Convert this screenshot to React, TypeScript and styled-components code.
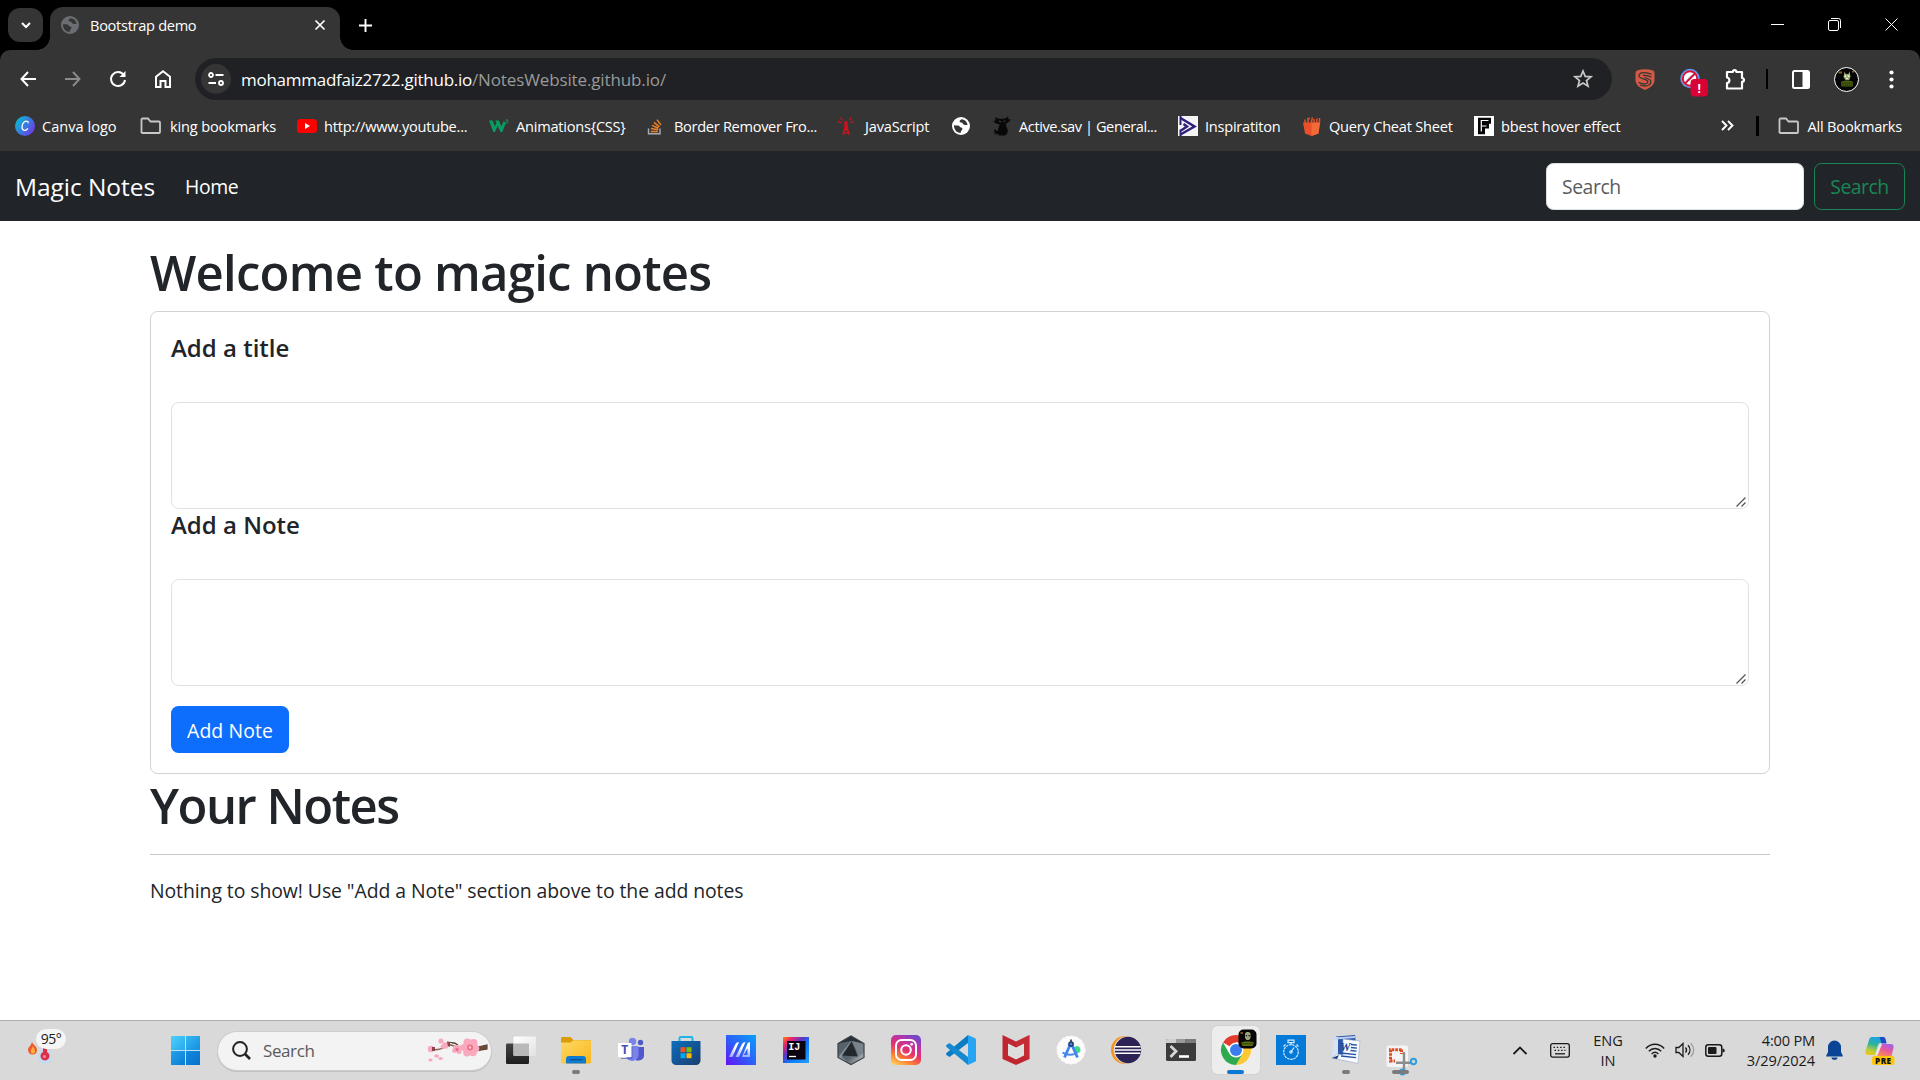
import React from "react";
import styled, { createGlobalStyle } from "styled-components";

const GlobalStyle = createGlobalStyle`
  *, *::before, *::after { box-sizing: border-box; }
  html, body { margin: 0; padding: 0; background: #fff; overflow: hidden; }
  body { font-family: "Open Sans", "Noto Sans", sans-serif; color: #212529; }
  svg { display: block; flex: none; overflow: visible; }
`;

const Screen = styled.div`
  width: 1920px;
  height: 1080px;
  display: flex;
  flex-direction: column;
  overflow: hidden;
`;

const Label = styled.span<{ $track?: number }>`
  white-space: nowrap;
  letter-spacing: ${(p) => p.$track ?? 0}px;
`;

/* ---------- Browser chrome ---------- */

const TabStrip = styled.div`
  height: 50px;
  flex: none;
  display: flex;
  padding-left: 8px;
  background: #000;
  color: #fff;
`;

const TabSearch = styled.div`
  width: 35px;
  height: 34px;
  margin-top: 8px;
  border-radius: 12px;
  background: #353535;
  display: grid;
  place-items: center;
`;

const Tab = styled.div`
  position: relative;
  width: 290px;
  height: 43px;
  margin: 7px 0 0 7px;
  padding: 0 15px 7px 11px;
  border-radius: 13px 13px 0 0;
  background: #353535;
  display: flex;
  align-items: center;
  gap: 11px;
  font-size: 14.6px;

  &::before,
  &::after {
    content: "";
    position: absolute;
    bottom: 0;
    width: 13px;
    height: 13px;
  }
  &::before {
    left: -13px;
    background: radial-gradient(circle at 0 0, transparent 12.5px, #353535 13px);
  }
  &::after {
    right: -13px;
    background: radial-gradient(circle at 100% 0, transparent 12.5px, #353535 13px);
  }
`;

const TabTitle = styled(Label)`
  flex: 1;
`;

const NewTab = styled.div`
  width: 51px;
  height: 50px;
  display: grid;
  place-items: center;
`;

const WindowControls = styled.div`
  margin-left: auto;
  display: flex;
`;

const WindowButton = styled.div`
  width: 57px;
  height: 49px;
  display: grid;
  place-items: center;
`;

const ToolbarBack = styled.div`
  background: #000;
  flex: none;
`;

const Toolbar = styled.div`
  height: 58px;
  padding-left: 5px;
  display: flex;
  align-items: center;
  background: #353535;
  border-radius: 10px 10px 0 0;
  color: #fff;
`;

const ToolCell = styled.div<{ $w?: number }>`
  width: ${(p) => p.$w ?? 45}px;
  flex: none;
  display: flex;
  justify-content: center;
  align-items: center;
`;

const AddressBar = styled.div`
  width: 1417px;
  height: 42px;
  margin: 0 10px;
  padding: 0 19px 0 6px;
  border-radius: 21px;
  background: #202124;
  display: flex;
  align-items: center;
  font-size: 17px;
`;

const SiteInfo = styled.div`
  width: 30px;
  height: 30px;
  margin-right: 10px;
  border-radius: 50%;
  background: #353535;
  display: grid;
  place-items: center;
`;

const Path = styled(Label)`
  flex: 1;
  color: #9a9a9a;
`;

const Avatar = styled.div`
  width: 25px;
  height: 25px;
  border-radius: 50%;
  border: 1px solid #fff;
  background: #050505;
  overflow: hidden;
  display: grid;
  place-items: center;
`;

const BookmarksBar = styled.div`
  height: 43px;
  flex: none;
  padding: 0 18px 8px 15px;
  display: flex;
  align-items: center;
  background: #353535;
  color: #fff;
  font-size: 14.6px;
`;

const Bookmark = styled.div<{ $w?: number }>`
  width: ${(p) => (p.$w ? `${p.$w}px` : "auto")};
  flex: none;
  display: flex;
  align-items: center;
  gap: 7px;
`;

const Overflow = styled.div`
  margin-left: auto;
  display: flex;
  align-items: center;
`;

const Divider = styled.div<{ $w?: number }>`
  width: ${(p) => p.$w ?? 2}px;
  height: 20px;
  background: #000;
`;

/* ---------- Web page ---------- */

const Page = styled.div`
  flex: 1;
  background: #fff;
`;

const Navbar = styled.nav`
  height: 70px;
  padding: 0 15px;
  display: flex;
  align-items: center;
  background: #212529;
  color: #fff;
`;

const Brand = styled(Label)`
  font-size: 24.5px;
  margin-right: 30px;
`;

const NavLink = styled(Label)`
  font-size: 19.4px;
`;

const SearchForm = styled.form`
  margin-left: auto;
  display: flex;
  gap: 10px;
`;

const SearchInput = styled.input`
  width: 258px;
  height: 47px;
  padding: 0 15px;
  border: 1px solid #dee2e6;
  border-radius: 7.5px;
  background: #fff;
  font: 19.4px "Open Sans", sans-serif;
  letter-spacing: -0.45px;
  &::placeholder { color: #595c5f; opacity: 1; }
`;

const SearchButton = styled.button`
  width: 91px;
  height: 47px;
  padding: 0;
  border: 1px solid #198754;
  border-radius: 7.5px;
  background: transparent;
  color: #198754;
  font: 19.4px "Open Sans", sans-serif;
  letter-spacing: -0.5px;
`;

const Container = styled.main`
  width: 1620px;
  margin: 0 auto;
  padding-top: 20px;
`;

const Heading = styled.h1<{ $track: number }>`
  margin: 0 0 10px;
  font-size: 49px;
  line-height: 62px;
  height: 60px;
  font-weight: 600;
  letter-spacing: ${(p) => p.$track}px;
`;

const Card = styled.section`
  height: 463px;
  padding: 20px;
  border: 1px solid #d1d2d3;
  border-radius: 7.5px;
`;

const CardTitle = styled.h5`
  margin: 0 0 40px;
  height: 30px;
  font-size: 24px;
  line-height: 32px;
  font-weight: 600;
  letter-spacing: 0;
`;

const NoteField = styled.div`
  position: relative;
  height: 107px;
`;

const NoteArea = styled.textarea`
  display: block;
  width: 1578px;
  height: 107px;
  border: 1px solid #dee2e6;
  border-radius: 7.5px;
  background: #fff;
  resize: none;
`;

const Grip = styled.svg`
  position: absolute;
  right: 3px;
  bottom: 2px;
`;

const AddButton = styled.button`
  display: block;
  width: 118px;
  height: 47px;
  margin-top: 20px;
  padding: 2px 0 0;
  border: 0;
  border-radius: 7.5px;
  background: #0d6efd;
  color: #fff;
  font: 19.4px "Open Sans", sans-serif;
  letter-spacing: 0.1px;
`;

const Rule = styled.hr`
  margin: 20px 0;
  border: 0;
  height: 1px;
  background: #c7c8c9;
`;

const Empty = styled.p`
  margin: 0;
  font-size: 19.4px;
  line-height: 32px;
  letter-spacing: -0.07px;
`;

/* ---------- Taskbar ---------- */

const Taskbar = styled.footer`
  height: 60px;
  flex: none;
  display: flex;
  align-items: center;
  background: #d9d9d9;
  border-top: 1px solid #b0b0b0;
  color: #1b1b1b;
`;

const Weather = styled.div`
  width: 171px;
  height: 59px;
  padding: 7px 0 0 28px;
  position: relative;
`;

const Temperature = styled.div`
  position: absolute;
  left: 36px;
  top: 8px;
  width: 30px;
  height: 20px;
  border-radius: 10px;
  background: #f5f5f5;
  font-size: 14px;
  line-height: 19px;
  text-align: center;
  letter-spacing: -0.5px;
`;

const StartButton = styled.div`
  width: 29px;
  height: 29px;
  display: grid;
  grid-template-columns: 14px 14px;
  grid-template-rows: 14px 14px;
  gap: 1px;
  background: #bfe0f5;
`;

const Pane = styled.div<{ $from: string; $to: string }>`
  background: linear-gradient(135deg, ${(p) => p.$from}, ${(p) => p.$to});
`;

const TaskSearch = styled.div`
  width: 273px;
  height: 38px;
  margin: 0 2px 0 18px;
  padding: 0 3px 0 14px;
  border-radius: 19px;
  background: #f3f3f3;
  box-shadow: 0 0 0 1px #cdcdcd, 0 1px 0 1px #c0c0c0;
  display: flex;
  align-items: center;
  gap: 12px;
  color: #5a5a5a;
  font-size: 17px;
`;

const TaskSearchText = styled(Label)`
  flex: 1;
`;

const TaskButton = styled.div`
  position: relative;
  width: 55px;
  height: 59px;
  padding-bottom: 1px;
  flex: none;
  display: grid;
  place-items: center;
`;

const ActiveTile = styled.div`
  width: 48px;
  height: 48px;
  border-radius: 5px;
  background: #ededed;
  box-shadow: 0 0 1px #aaa;
  display: grid;
  place-items: center;
`;

const RunMark = styled.div<{ $w: number; $color: string }>`
  position: absolute;
  left: calc(50% - ${(p) => p.$w / 2}px);
  bottom: 6px;
  width: ${(p) => p.$w}px;
  height: 4px;
  border-radius: 2px;
  background: ${(p) => p.$color};
`;

const Tray = styled.div`
  flex: 1;
  display: flex;
  align-items: center;
  padding: 0 0 1px 84px;
  font-size: 14.6px;
  line-height: 20px;
`;

const TrayCell = styled.div<{ $w: number }>`
  width: ${(p) => p.$w}px;
  display: flex;
  flex: none;
`;

const Stack = styled.div<{ $w: number; $align: string }>`
  width: ${(p) => p.$w}px;
  flex: none;
  display: flex;
  flex-direction: column;
  align-items: ${(p) => p.$align};
  padding-bottom: 1px;
`;

/* ---------- Drawings ---------- */

const Globe = ({ size = 18, fill = "#6a6d71", cut = "#353535" }) => (
  <svg width={size} height={size} viewBox="0 0 18 18">
    <circle cx="9" cy="9" r="9" fill={fill} />
    <path d="M2 8.2c2 .4 5-.4 5.600 1.200.4 1.400 2.600.6 2.800 2 .2 1.600-1.400 1.400-1.600 4.400-3.800.2-7-3-6.800-7.600zM9.600 2.200c-1 1-2.300 1-2 2.400.4 1.400 2.600.6 3.200 1.800.6 1.400 2.600 2 4.800 1.600-.6-3.600-3-5.600-6-5.800z" fill={cut} />
  </svg>
);

const FolderOutline = () => (
  <svg width="23" height="20" viewBox="0 0 23 20" fill="none" stroke="#c8c8c8" strokeWidth="1.800">
    <path d="M1.500 17V3.500a1 1 0 0 1 1-1h5.500l2.500 3h8.500a1 1 0 0 1 1 1V16a1 1 0 0 1-1 1H2.500a1 1 0 0 1-1-1z" />
  </svg>
);

const Creature = ({ size }: { size: number }) => (
  <svg width={size} height={size} viewBox="0 0 20 20">
    <path d="M1.500 2.500h3.500v2H1.500zM15 2h2v1.500h-2z" fill="#8a5a14" />
    <path d="M7.500 2.500l1.200 2.500h2.600l1.200-2.500 1 5-1.300 3.500H8.500L6.500 8z" fill="#9aa880" />
    <path d="M7.500 6.500h1.800v1.500H7.500zM10.800 6.500h1.700v1.500h-1.700zM9 9h2v1H9z" fill="#efffb0" />
    <path d="M4 13c3-2 9-2 12 0l-.5 4.500h-11z" fill="#4d6112" />
    <path d="M5 14h10M5.500 16h9" stroke="#1b2406" strokeWidth=".9" strokeDasharray="1.500 .6" />
  </svg>
);

const CanvaIcon = () => (
  <svg width="20" height="20" viewBox="0 0 20 20">
    <defs><linearGradient id="canva" x1="0" y1="0.200" x2="1" y2="0.900"><stop offset="0" stopColor="#09bcd0" /><stop offset="0.500" stopColor="#3b78e0" /><stop offset="1" stopColor="#7a2be8" /></linearGradient></defs>
    <circle cx="10" cy="10" r="10" fill="url(#canva)" />
    <path d="M13.300 7.200c0-1.600-1-2.200-2.200-2.100C8.600 5.300 6.900 8.500 7 11.300c.1 3.600 3.900 4.300 5.900 1" fill="none" stroke="#fff" strokeWidth="1.300" />
  </svg>
);

const YoutubeIcon = () => (
  <svg width="20" height="20" viewBox="0 0 20 20"><rect y="3" width="20" height="14" rx="3.500" fill="#f00" /><path d="M8 7l5 3-5 3z" fill="#fff" /></svg>
);

const W3Icon = () => (
  <svg width="20" height="20" viewBox="0 0 20 20" fill="none" stroke="#0a9b63">
    <path d="M0 4.500h3.600l2.400 6 1.400-3.600-.9-2.400h3.400l2.500 6 2.200-5.200 2.400 1.200-3.700 9.500h-1.800L8.700 9.800 6 16H4.300z" fill="#0a9b63" stroke="none" />
    <path d="M16.500 4h2.500l-1.300 1.600c1.800.2 1.300 2.200-.9 1.700" strokeWidth="1" />
  </svg>
);

const StackIcon = () => (
  <svg width="20" height="20" viewBox="0 0 20 20" fill="none">
    <path d="M1.500 12.500v5.300h11.500V12.500" stroke="#a9adb1" strokeWidth="1.400" />
    <path d="M3.800 15.500h7M4 12.600l7 1.200M5 9.400l6.400 2.800M7 6.400l5.300 4.400M10 3.600l4 5.500" stroke="#f08127" strokeWidth="1.500" />
  </svg>
);

const TowerIcon = () => (
  <svg width="20" height="20" viewBox="0 0 20 20" fill="none" stroke="#c8141f" strokeWidth="1.300">
    <path d="M8 6.500L5 19M8 6.500L11.300 19M6.800 11h2.500l-4 6h5.500l-3.800-6M4.500 4.500L2.500 1M11.500 4.500L13.500 1M3.500 6.800L0 5.300M12.500 6.800L16 5.300" />
    <path d="M7 6h2v5H7z" fill="#c8141f" />
  </svg>
);

const CatIcon = () => (
  <svg width="20" height="20" viewBox="0 0 20 20">
    <path d="M3.500.5l3.500 1.300h5l4-1.500.5 2.900 2.500.3-2.300 2.500-2.900 2 .9 3.500c2 3.500 1 7-2 8H7c-4.500 0-7-3.200-4.800-6.500 2.300 1.800 3.300 2.500 4 .8 0-2.300 1-3.300 1.600-5.300L4 7.500 1 5l2.300-.3z" fill="#080808" />
    <path d="M4 1l3 1.200h5l3.600-1.400M1.800 13.500c-1 3 1.500 5 5 5.500" fill="none" stroke="#5b5b5b" strokeWidth=".6" />
    <path d="M7 5l2.200.9M13.300 4.700l-1.900 1.200" stroke="#555" strokeWidth=".8" />
  </svg>
);

const InspirationIcon = () => (
  <svg width="20" height="20" viewBox="0 0 20 20">
    <rect width="20" height="20" fill="#f4f4f4" />
    <path d="M2.500 0v9M2.500 20v-6.500" stroke="#32207c" strokeWidth="2" />
    <path d="M2.500 2l14 8.500L2.500 18.500M3 14.500l6-4-3.500-2.500" fill="none" stroke="#32207c" strokeWidth="2.500" />
  </svg>
);

const BasketIcon = () => (
  <svg width="20" height="20" viewBox="0 0 20 20">
    <path d="M1 6.500h17L16.500 17.500 9.500 20 3 17.500z" fill="#e8502a" />
    <path d="M9.500 6.500H18L16.500 17.500 9.500 20z" fill="#f26a35" />
    <path d="M3 7V3.500M6 7V2.500h2M9 7l1.500-5.500M12 7V3M14.500 7l.5-4.500M17.500 7V2" stroke="#e8502a" strokeWidth="1.500" fill="none" />
  </svg>
);

const FIcon = () => (
  <svg width="20" height="20" viewBox="0 0 20 20">
    <rect width="20" height="20" fill="#fff" />
    <path d="M4 1.800h13v6h-2v4.700h-4v5.700H4z" fill="#050505" />
    <path d="M14.500 4.500H7.300v11M7.500 10h5" fill="none" stroke="#fff" strokeWidth="1.200" />
  </svg>
);

const Blossom = () => (
  <svg width="61" height="26" viewBox="0 0 61 26">
    <path d="M4 11.500c8 1 12-1 18-5 8 3 16 4 30 3.500" fill="none" stroke="#8a6455" strokeWidth="1.500" />
    <path d="M20 4l8 1 3 2M51 9l9-2v4l-9 1.500z" stroke="#5e4034" strokeWidth="1.200" fill="#6d4a3a" />
    <g fill="#f9a9bd">
      <circle cx="4" cy="11" r="3.200" /><circle cx="14" cy="3" r="2.600" /><circle cx="18.500" cy="7.500" r="3.200" /><circle cx="15.500" cy="8.500" r="2" />
      <circle cx="28.500" cy="9.500" r="2.500" /><circle cx="32.500" cy="9.800" r="2.500" /><circle cx="27.500" cy="12.700" r="2.400" /><circle cx="32" cy="13.500" r="2.500" />
      <circle cx="40.500" cy="4.500" r="4" /><circle cx="46.500" cy="5" r="4" /><circle cx="48.500" cy="10.500" r="3.800" /><circle cx="37.500" cy="9.500" r="3.700" /><circle cx="46" cy="14.500" r="3.800" /><circle cx="40" cy="14.800" r="3.800" />
      <ellipse cx="3.500" cy="22" rx="2.200" ry="1.500" /><ellipse cx="9.500" cy="18" rx="2.500" ry="1.700" /><ellipse cx="13.500" cy="20.500" rx="2.300" ry="1.500" />
    </g>
    <path d="M5 9h3v4H5zM20 4l3 1v4l-2-1z" fill="#8d4450" />
    <circle cx="43" cy="9.500" r="3" fill="#f06c8c" /><circle cx="43" cy="9.500" r="1.200" fill="#ffd9b8" />
    <circle cx="30" cy="11.500" r="1.700" fill="#f06c8c" />
  </svg>
);

const Ico: React.FC<{ children: React.ReactNode }> = ({ children }) => (
  <svg width="30" height="30" viewBox="0 0 30 30">{children}</svg>
);

const TaskView = () => (
  <Ico>
    <defs><linearGradient id="tvd" x1="0" y1="0" x2="0" y2="1"><stop offset="0" stopColor="#444" /><stop offset="1" stopColor="#1d1d1d" /></linearGradient><linearGradient id="tvl" x1="0" y1="0" x2="1" y2="1"><stop offset="0" stopColor="#fff" /><stop offset="1" stopColor="#e2e2e2" /></linearGradient></defs>
    <rect y="8.500" width="23" height="20.500" rx="1.200" fill="url(#tvd)" />
    <rect x="7.500" y="1.500" width="22.500" height="19.500" rx="1.200" fill="url(#tvl)" />
    <path d="M7.500 8.500H23V21H8.700a1.200 1.200 0 0 1-1.200-1.200z" fill="#b9b9b9" />
  </Ico>
);

const Explorer = () => (
  <Ico>
    <defs><linearGradient id="fold" x1="0" y1="0" x2="1" y2="1"><stop offset="0" stopColor="#ffd964" /><stop offset="1" stopColor="#f9b61f" /></linearGradient></defs>
    <path d="M0 3.500A1.500 1.500 0 0 1 1.500 2h8l3 3H28.500A1.500 1.500 0 0 1 30 6.500V14H0z" fill="#dc9b0a" />
    <path d="M0 7.500h9.500l3-2.200H30V27a1.500 1.500 0 0 1-1.500 1.500h-27A1.500 1.500 0 0 1 0 27z" fill="url(#fold)" />
    <path d="M5 28.500v-4.500a3 3 0 0 1 3-3h14a3 3 0 0 1 3 3v4.500z" fill="#117bcf" />
    <path d="M9 24.700h12.500" stroke="#07508f" strokeWidth="1.200" />
  </Ico>
);

const Teams = () => (
  <Ico>
    <circle cx="16.500" cy="6.500" r="3.700" fill="#7b83eb" /><circle cx="24.500" cy="7.500" r="2.700" fill="#5059c9" />
    <path d="M20 12h8v8.500a5 5 0 0 1-5 5h-3z" fill="#5059c9" />
    <path d="M11 11h11.500v9a6.500 6.500 0 0 1-12 3z" fill="#7b83eb" />
    <path d="M15 12h1.500v12H5v-1h10z" fill="#444bb0" opacity=".6" />
    <rect x="2" y="8" width="13.500" height="14" fill="#fff" />
    <text x="8.700" y="19.200" textAnchor="middle" fontFamily="Open Sans" fontWeight="700" fontSize="12" fill="#464eb8">T</text>
  </Ico>
);

const Store = () => (
  <Ico>
    <defs><linearGradient id="store" x1="0" y1="0" x2="1" y2="1"><stop offset="0" stopColor="#0a6fbe" /><stop offset="1" stopColor="#1c3c70" /></linearGradient></defs>
    <path d="M8.500 7V3.300c0-.8.500-1.300 1.300-1.300h10.400c.8 0 1.300.500 1.300 1.300V7" fill="none" stroke="#1fb5e8" strokeWidth="2" />
    <path d="M.5 6h29v19.500a4.500 4.500 0 0 1-4.500 4.500H5A4.500 4.500 0 0 1 .5 25.500z" fill="url(#store)" />
    <path d="M9.500 12.200h5v5h-5z" fill="#f35325" /><path d="M15.500 12.200h5v5h-5z" fill="#81bc06" /><path d="M9.500 18.200h5v5h-5z" fill="#05a6f0" /><path d="M15.500 18.200h5v5h-5z" fill="#ffba08" />
  </Ico>
);

const MyAsus = () => (
  <Ico>
    <defs><linearGradient id="asus" x1="0" y1="1" x2="1" y2="0"><stop offset="0" stopColor="#6512f5" /><stop offset=".5" stopColor="#2b62f8" /><stop offset="1" stopColor="#08a0fb" /></linearGradient><linearGradient id="asusm" x1="0" y1="1" x2="0" y2="0"><stop offset="0" stopColor="#9aa8ff" /><stop offset=".6" stopColor="#fff" /></linearGradient></defs>
    <rect width="30" height="30" fill="url(#asus)" />
    <path d="M3 22L9.500 9c.8-1.300 1.800-2 3.500-2L6.500 22zM9.500 22L16 9c.8-1.300 1.800-2 3.500-2L13 22z" fill="url(#asusm)" />
    <path d="M16 22L21.500 8.500c.8-1.200 2-1.500 2.500-1.200V22h-2.500V13L17.800 20h3.700v2z" fill="url(#asusm)" />
  </Ico>
);

const IntelliJ = () => (
  <Ico>
    <defs><linearGradient id="ij" x1="0" y1="0" x2="1" y2="1"><stop offset="0" stopColor="#ff8a00" /><stop offset=".18" stopColor="#f0246a" /><stop offset=".4" stopColor="#5b35c9" /><stop offset=".6" stopColor="#087cfa" /><stop offset="1" stopColor="#2a9df8" /></linearGradient></defs>
    <rect x="2" y="2" width="26" height="26" fill="url(#ij)" />
    <rect x="6" y="6" width="18.500" height="18.500" fill="#0b0410" />
    <text x="7.200" y="14.800" fontFamily="Liberation Mono" fontWeight="700" fontSize="10" fill="#fff">IJ</text>
    <path d="M8 21.500h7" stroke="#fff" strokeWidth="1.300" />
  </Ico>
);

const HexIcon = () => (
  <Ico>
    <defs><linearGradient id="hex" x1="0" y1="0" x2="1" y2="1"><stop offset="0" stopColor="#56616a" /><stop offset=".6" stopColor="#59636b" /><stop offset="1" stopColor="#d8dadd" /></linearGradient></defs>
    <path d="M15 1l13 7.500v14L15 29.500 2 22.500v-14z" fill="url(#hex)" />
    <path d="M15 1l13 7.500L15 6 2 8.500z" fill="#2a3036" />
    <path d="M2 22.500L15 6v3L5.500 22 15 29.500z" fill="#8a959d" />
    <path d="M15.500 6.500l6.500 15-16-1z" fill="#23282d" />
    <path d="M16 6l12 3v8l-5 4z" fill="#78838b" />
    <path d="M2 8.500v14L15 29.500l13-7v-14L15 1z" fill="none" stroke="#3a4147" strokeWidth="1.200" />
  </Ico>
);

const Instagram = () => (
  <Ico>
    <defs><linearGradient id="ig" x1="0.200" y1="1" x2="0.700" y2="0"><stop offset="0" stopColor="#ffc852" /><stop offset=".25" stopColor="#fb7a34" /><stop offset=".5" stopColor="#e5326c" /><stop offset=".78" stopColor="#b834a8" /><stop offset="1" stopColor="#7347c8" /></linearGradient></defs>
    <rect width="30" height="30" rx="5" fill="url(#ig)" />
    <g fill="none" stroke="#fff" strokeWidth="2"><rect x="5" y="5" width="20" height="20" rx="5.500" /><circle cx="15" cy="15" r="4.800" /></g>
    <circle cx="20.700" cy="9.300" r="1.400" fill="#fff" />
  </Ico>
);

const VsCode = () => (
  <Ico>
    <path d="M22 0v8L3.500 22 .500 20c-.6-.6-.6-1.500 0-2z" fill="#0a7cc4" />
    <path d="M22 30v-8L3.500 8 .500 10c-.6.6-.6 1.500 0 2z" fill="#1589cf" />
    <path d="M22 0l7 3.300c.6.300 1 .8 1 1.500v20.400c0 .7-.4 1.200-1 1.500L22 30z" fill="#27a5f2" />
  </Ico>
);

const McAfee = () => (
  <Ico>
    <path d="M1.500 0L15 6.500 28.500 0v24L15 30 1.500 24z" fill="#bf2630" />
    <path d="M7 8.500l8 4 8-4v12L15 24.500 7 20.500z" fill="#dedede" />
    <path d="M15 6.500v6l8-4v12l5.500 3.500V0z" fill="#d53a3f" opacity=".35" />
  </Ico>
);

const AndroidStudio = () => (
  <Ico>
    <circle cx="15" cy="15" r="14" fill="#fbfbfb" stroke="#fbfbfb" strokeDasharray="3 2" />
    <path d="M17 12.500l4-1.500c3 0 4.500 4 2.500 6.500l-3 1z" fill="#3ddc84" />
    <path d="M8.500 22.500L14.300 9.500h1.400l5.800 13" fill="none" stroke="#4285f4" strokeWidth="2.800" />
    <path d="M6.500 17.500c4 3 10 3 14.500.5" fill="none" stroke="#4285f4" strokeWidth="2" />
    <circle cx="15" cy="9" r="2.200" fill="#4285f4" stroke="#1e2a45" strokeWidth="1.200" /><path d="M15 4.500v3" stroke="#34435c" strokeWidth="1.800" />
  </Ico>
);

const Eclipse = () => (
  <Ico>
    <circle cx="14" cy="15" r="14" fill="#f7941e" /><circle cx="16.500" cy="15" r="13.800" fill="#dcdcdc" /><circle cx="17" cy="15" r="13.200" fill="#2c2255" />
    <path d="M4 11.800h25.500M3.500 15H30M4 18.300h25.500" stroke="#fff" strokeWidth="1.500" />
  </Ico>
);

const Terminal = () => (
  <Ico>
    <rect y="4" width="30" height="22" rx="1.500" fill="#3c3c3c" />
    <path d="M1.500 4H10v4H0V5.500A1.500 1.500 0 0 1 1.500 4z" fill="#cfcfcf" /><path d="M10 4h9.500v4H10z" fill="#9a9a9a" /><path d="M19.500 4h9A1.500 1.500 0 0 1 30 5.500V8H19.500z" fill="#7b7b7b" />
    <path d="M4.500 11l5.500 5.200L4.500 22" fill="none" stroke="#d5d5d5" strokeWidth="2.800" /><path d="M13 21.500h10" stroke="#fff" strokeWidth="2.600" />
  </Ico>
);

const Chrome = () => (
  <Ico>
    <circle cx="15" cy="15" r="15" fill="#fff" />
    <path d="M15 15L2 7.500A15 15 0 0 1 28 7.500H15z" fill="#e33b2e" />
    <path d="M15 15L28 7.500A15 15 0 0 1 15 30l6.500-11.200z" fill="#fcc934" />
    <path d="M15 15l6.500 3.800L15 30A15 15 0 0 1 2 7.500l6.500 11.200z" fill="#2da94f" />
    <path d="M15 7.500h13L20 16z" fill="#fcc934" />
    <circle cx="15" cy="15" r="7.500" fill="#fff" /><circle cx="15" cy="15" r="6" fill="#3b7ded" />
    <rect x="17.500" y="-5.500" width="18" height="19" rx="5" fill="#070707" />
    <g transform="translate(17.500 -5)">
      <path d="M2 2h2.500v2H2z" fill="#7a5212" />
      <path d="M6.500 3.500l1.500-1.500h2.500l1.500 1.500v4.500l-1.500 2h-2.500l-1.500-2z" fill="#9aa67c" />
      <path d="M7.300 5h1.300v1.200H7.300zM10 5h1.300v1.200H10z" fill="#111" />
      <path d="M2.500 12.500c3-1.500 10-1.500 13 0l-1.500 3.500H4z" fill="#5b6f10" />
      <path d="M4 13.800h10.500" stroke="#1b2406" strokeWidth=".8" strokeDasharray="1.500 .5" />
    </g>
  </Ico>
);

const Stopwatch = () => (
  <Ico>
    <rect width="30" height="30" fill="#0379d8" />
    <g fill="none" stroke="#d7ecff" strokeWidth="1.200"><circle cx="15" cy="17" r="7.300" strokeDasharray="2.500 .7" /><path d="M12 5.200h6v2.500h-6zM15 8v2M20.500 9.500l2 2M15 17l3-4.500M9.500 9.500l-2 2" /><circle cx="15" cy="17" r="1.200" /></g>
  </Ico>
);

const Word = () => (
  <Ico>
    <path d="M5 1.500l19-1.500 2 18-20 5z" fill="#2c56a8" /><path d="M3 2h4v22l-6-3z" fill="#d7e2f5" /><path d="M4 3.500L24 2" stroke="#bcd0f4" strokeWidth="2" />
    <path d="M12 4l17 2-2 22.500L1 23l5-4 6 1z" fill="#f7faff" stroke="#96a8c8" strokeWidth=".6" />
    <text x="9" y="15.500" fontFamily="Liberation Serif" fontStyle="italic" fontWeight="700" fontSize="12" fill="#1f4798">W</text>
    <path d="M20 9.500l6 .6M20 12.500l6 .6M19.500 15.500l6 .6M10 18l15 1.600M10 21l15 1.600" stroke="#2450a4" strokeWidth="1.400" />
    <path d="M1 23l7-3-2 4z" fill="#1d3f86" />
  </Ico>
);

const Snip = () => (
  <Ico>
    <rect x=".5" y="10.500" width="21.500" height="21.500" rx="2.500" fill="#f4f4f4" />
    <path d="M15.500 14.800H4.500V26H9M15.500 14.500V19" fill="none" stroke="#dd4b25" strokeWidth="3" strokeDasharray="2.600 1" />
    <path d="M18 17v19M10 27.800h15" stroke="#8c8c8c" strokeWidth="2.400" />
    <circle cx="27.500" cy="26.500" r="2.700" fill="none" stroke="#2c9fe0" strokeWidth="1.900" /><circle cx="16.500" cy="37" r="2.500" fill="none" stroke="#2c9fe0" strokeWidth="1.900" />
  </Ico>
);

const Copilot = () => (
  <svg width="30" height="30" viewBox="0 0 30 30">
    <defs>
      <linearGradient id="cpa" x1=".5" y1="0" x2=".2" y2="1"><stop offset="0" stopColor="#1aa3e8" /><stop offset=".4" stopColor="#2fb39b" /><stop offset=".75" stopColor="#b6cf3a" /><stop offset="1" stopColor="#f5c518" /></linearGradient>
      <linearGradient id="cpb" x1=".8" y1="0" x2=".3" y2="1"><stop offset="0" stopColor="#a45ef0" /><stop offset=".5" stopColor="#e65a9c" /><stop offset="1" stopColor="#fb8a5c" /></linearGradient>
    </defs>
    <path d="M7 2h11c2 0 2.500 1.500 3.500 6h-6c-2 0-2.500 2-3.500 5l-2 7H3c-2.500 0-3-2-2.500-4L4 5c.5-2 1.500-3 3-3z" fill="url(#cpa)" />
    <path d="M14 2h4c2 0 2.700 2 3.500 6.500h-5C15.500 5 15 2 14 2z" fill="#1f49c9" />
    <path d="M17 9h8.500c2.500 0 3.500 1.500 3 4l-2 8H12l2-6c1-4 1.500-6 3-6z" fill="url(#cpb)" />
    <path d="M16 9l-4.500 11" stroke="#e6e6e6" strokeWidth="2" />
    <rect x="7" y="21" width="22.500" height="9" rx="2.500" fill="#fdc60d" />
    <text x="18.300" y="28.500" textAnchor="middle" fontFamily="Open Sans" fontWeight="800" fontSize="8.200" letterSpacing=".4" fill="#111">PRE</text>
  </svg>
);

type Mark = { icon: React.ReactNode; text?: string; w: number; track?: number };
const bookmarks: Mark[] = [
  { icon: <CanvaIcon />, text: "Canva logo", w: 125 },
  { icon: <FolderOutline />, text: "king bookmarks", w: 157, track: -0.17 },
  { icon: <YoutubeIcon />, text: "http://www.youtube...", w: 192, track: -0.24 },
  { icon: <W3Icon />, text: "Animations{CSS}", w: 158, track: -0.24 },
  { icon: <StackIcon />, text: "Border Remover Fro...", w: 191, track: -0.31 },
  { icon: <TowerIcon />, text: "JavaScript", w: 114, track: -0.2 },
  { icon: <Globe fill="#fff" />, w: 40 },
  { icon: <CatIcon />, text: "Active.sav | General...", w: 186, track: -0.42 },
  { icon: <InspirationIcon />, text: "Inspiratiton", w: 124, track: -0.25 },
  { icon: <BasketIcon />, text: "Query Cheat Sheet", w: 172, track: -0.23 },
  { icon: <FIcon />, text: "bbest hover effect", w: 170, track: -0.22 },
];

type Task = { icon: React.ReactNode; mark?: { w: number; color: string }; active?: boolean };
const tasks: Task[] = [
  { icon: <TaskView /> },
  { icon: <Explorer />, mark: { w: 8, color: "#7b7b7b" } },
  { icon: <Teams /> },
  { icon: <Store /> },
  { icon: <MyAsus /> },
  { icon: <IntelliJ /> },
  { icon: <HexIcon /> },
  { icon: <Instagram /> },
  { icon: <VsCode /> },
  { icon: <McAfee /> },
  { icon: <AndroidStudio /> },
  { icon: <Eclipse /> },
  { icon: <Terminal /> },
  { icon: <Chrome />, active: true, mark: { w: 17, color: "#0a78d4" } },
  { icon: <Stopwatch /> },
  { icon: <Word />, mark: { w: 8, color: "#7b7b7b" } },
  { icon: <Snip />, mark: { w: 17, color: "#7b7b7b" } },
];

const NoteBox = () => (
  <NoteField>
    <NoteArea />
    <Grip width="10" height="10" viewBox="0 0 10 10" fill="none" stroke="#555" strokeWidth="1.300">
      <path d="M.5 9.500l9-9M5.500 9.500l4-4" />
    </Grip>
  </NoteField>
);

export default function App() {
  return (
    <Screen>
      <GlobalStyle />
      <TabStrip>
        <TabSearch>
          <svg width="10" height="7" viewBox="0 0 10 7" fill="none" stroke="#fff" strokeWidth="2"><path d="M1 1l4 4 4-4" /></svg>
        </TabSearch>
        <Tab>
          <Globe />
          <TabTitle $track={-0.3}>Bootstrap demo</TabTitle>
          <svg width="10" height="10" viewBox="0 0 10 10" stroke="#fff" strokeWidth="1.700"><path d="M.5.5l9 9M9.500.5l-9 9" /></svg>
        </Tab>
        <NewTab>
          <svg width="13" height="13" viewBox="0 0 13 13" stroke="#fff" strokeWidth="1.900"><path d="M6.500 0v13M0 6.500h13" /></svg>
        </NewTab>
        <WindowControls>
          <WindowButton><svg width="13" height="13" viewBox="0 0 13 13"><path d="M0 6.500h13" stroke="#fff" /></svg></WindowButton>
          <WindowButton><svg width="13" height="13" viewBox="0 0 13 13" fill="none" stroke="#fff"><rect x=".5" y="2.500" width="10" height="10" rx="1.500" /><path d="M3 .5h7.500a2 2 0 0 1 2 2V10" /></svg></WindowButton>
          <WindowButton><svg width="13" height="13" viewBox="0 0 13 13" stroke="#fff"><path d="M.5.5l12 12M12.500.5l-12 12" /></svg></WindowButton>
        </WindowControls>
      </TabStrip>

      <ToolbarBack>
        <Toolbar>
          <ToolCell><svg width="16" height="16" viewBox="0 0 16 16" fill="none" stroke="#fff" strokeWidth="2"><path d="M8 1L1.500 8 8 15M1.500 8H16" /></svg></ToolCell>
          <ToolCell><svg width="16" height="16" viewBox="0 0 16 16" fill="none" stroke="#8b8b8b" strokeWidth="1.900"><path d="M8 1l6.500 7L8 15M14.500 8H0" /></svg></ToolCell>
          <ToolCell><svg width="16" height="16" viewBox="0 0 16 16" fill="none" stroke="#fff" strokeWidth="2"><path d="M13.800 4A7 7 0 1 0 15 9" /><path d="M15.500 0v6h-6z" fill="#fff" stroke="none" /></svg></ToolCell>
          <ToolCell><svg width="16" height="18" viewBox="0 0 16 18" fill="none" stroke="#fff" strokeWidth="2"><path d="M1 6.800L8 1.300l7 5.500V17h-4.500v-6h-5v6H1z" /></svg></ToolCell>
          <AddressBar>
            <SiteInfo>
              <svg width="16" height="14" viewBox="0 0 16 14" fill="none" stroke="#fff" strokeWidth="1.800"><circle cx="3" cy="3" r="2" /><path d="M7.500 3H15.500M.5 11H8" /><circle cx="13" cy="11" r="2" /></svg>
            </SiteInfo>
            <Label $track={-0.26}>mohammadfaiz2722.github.io</Label>
            <Path $track={-0.13}>/NotesWebsite.github.io/</Path>
            <svg width="20" height="20" viewBox="0 0 20 20" fill="none" stroke="#c9c9c9" strokeWidth="1.700"><path d="M10 2l2.200 5.400 5.800.4-4.500 3.700 1.500 5.700-5-3.200-5 3.200 1.500-5.700L2 7.800l5.800-.4z" /></svg>
          </AddressBar>
          <ToolCell>
            <svg width="20" height="21" viewBox="0 0 20 21"><path d="M2 1.500Q10-1 18 1.500q1.500.5 1.500 3v7q0 5.500-9.500 9.500-9.500-4-9.500-9.500v-7q0-2.500 1.500-3z" fill="#d45a44" /><path d="M16.500 5.200Q10 2.500 5.500 4.200q-3.500 2.600.5 4.800l5 1.800q3.200 1.500 1 3.500-3 1.800-8.500-1M16.500 8.200q-3-2-8.500-1.700M4.500 10.500M5 16q5 2 9 0 3.500-3 .5-5.500L9.500 8.500" fill="none" stroke="#353535" strokeWidth="1.300" /></svg>
          </ToolCell>
          <ToolCell $w={45.5}>
            <svg width="20" height="20" viewBox="0 0 20 20">
              <circle cx="10" cy="9.500" r="9.700" fill="#5a9cf5" /><circle cx="10" cy="9.500" r="8" fill="#fff" /><circle cx="10" cy="9.500" r="7.200" fill="#fff" stroke="#d3123c" strokeWidth="2" />
              <path d="M6 11l5-5 3 1-5 5z" fill="#c8d9ee" /><path d="M5 14.500l10-10" stroke="#d3123c" strokeWidth="2" />
              <rect x="10.500" y="10" width="17.500" height="17.500" rx="4" fill="#d90036" />
              <text x="19.200" y="23.500" textAnchor="middle" fontFamily="Open Sans" fontWeight="700" fontSize="12" fill="#fff">!</text>
            </svg>
          </ToolCell>
          <ToolCell $w={45.5}>
            <svg width="21" height="21" viewBox="0 0 21 21" fill="none" stroke="#fff" strokeWidth="2.200" strokeLinejoin="round"><path d="M2 3h5.800c.2-2.600 3.400-2.600 3.600 0H17v6c2.600.2 2.600 3.700 0 3.900V19.500H2v-5.300c3.200-.4 3.200-5.300 0-5.700z" /></svg>
          </ToolCell>
          <ToolCell $w={18}><Divider /></ToolCell>
          <ToolCell $w={50}>
            <svg width="18" height="19" viewBox="0 0 18 19"><rect x="1" y="1" width="16" height="17" rx="1.500" fill="none" stroke="#fff" strokeWidth="2" /><path d="M10.500 1H17v17h-6.500z" fill="#fff" /></svg>
          </ToolCell>
          <ToolCell $w={41}><Avatar><Creature size={20} /></Avatar></ToolCell>
          <ToolCell $w={48}>
            <svg width="5" height="19" viewBox="0 0 5 19" fill="#fff"><circle cx="2.500" cy="2.500" r="2.100" /><circle cx="2.500" cy="9.500" r="2.100" /><circle cx="2.500" cy="16.500" r="2.100" /></svg>
          </ToolCell>
        </Toolbar>
      </ToolbarBack>

      <BookmarksBar>
        {bookmarks.map((b, i) => (
          <Bookmark key={i} $w={b.w}>
            {b.icon}
            {b.text && <Label $track={b.track}>{b.text}</Label>}
          </Bookmark>
        ))}
        <Overflow>
          <Bookmark $w={35}>
            <svg width="13" height="11" viewBox="0 0 13 11" fill="none" stroke="#fff" strokeWidth="1.900"><path d="M1 1l4.500 4.500L1 10M7 1l4.500 4.500L7 10" /></svg>
          </Bookmark>
          <Bookmark $w={22}><Divider $w={3} /></Bookmark>
          <Bookmark>
            <FolderOutline />
            <Label $track={-0.22}>All Bookmarks</Label>
          </Bookmark>
        </Overflow>
      </BookmarksBar>

      <Page>
        <Navbar>
          <Brand $track={-0.05}>Magic Notes</Brand>
          <NavLink $track={-0.4}>Home</NavLink>
          <SearchForm>
            <SearchInput placeholder="Search" />
            <SearchButton type="button">Search</SearchButton>
          </SearchForm>
        </Navbar>
        <Container>
          <Heading $track={-0.74}>Welcome to magic notes</Heading>
          <Card>
            <CardTitle>Add a title</CardTitle>
            <NoteBox />
            <CardTitle>Add a Note</CardTitle>
            <NoteBox />
            <AddButton type="button">Add Note</AddButton>
          </Card>
          <Heading $track={-1.5}>Your Notes</Heading>
          <Rule />
          <Empty>Nothing to show! Use "Add a Note" section above to the add notes</Empty>
        </Container>
      </Page>

      <Taskbar>
        <Weather>
          <svg width="26" height="36" viewBox="0 0 26 36">
            <path d="M4 14c1 3 5 4 5 8 0 3-2 4.500-4.500 4.500S0 24.500 0 22c0-3 3-4 4-8z" fill="#ee5a2c" /><path d="M5 18c.5 2 2 3 2 5s-1 2.500-2.500 2.500S2.500 24 3 22z" fill="#ffb03a" />
            <path d="M13 9a4 4 0 0 1 8 0v14a7 7 0 1 1-8 0z" fill="#c3daf2" /><path d="M15 10h4v14a4.500 4.500 0 1 1-4 0z" fill="#dc2f48" /><circle cx="16.500" cy="28.500" r="1.500" fill="#f58ba0" />
          </svg>
          <Temperature>95°</Temperature>
        </Weather>
        <StartButton>
          <Pane $from="#4fd0fb" $to="#28a8ec" />
          <Pane $from="#35b6f2" $to="#1590e0" />
          <Pane $from="#25a3ea" $to="#0a7bd4" />
          <Pane $from="#138bdd" $to="#0570cc" />
        </StartButton>
        <TaskSearch>
          <svg width="19" height="19" viewBox="0 0 19 19" fill="none" stroke="#222" strokeWidth="2"><circle cx="8" cy="8" r="6.900" /><path d="M13 13l5 5" strokeWidth="2.600" /></svg>
          <TaskSearchText $track={-0.4}>Search</TaskSearchText>
          <Blossom />
        </TaskSearch>
        {tasks.map((t, i) => (
          <TaskButton key={i}>
            {t.active ? <ActiveTile>{t.icon}</ActiveTile> : t.icon}
            {t.mark && <RunMark $w={t.mark.w} $color={t.mark.color} />}
          </TaskButton>
        ))}
        <Tray>
          <TrayCell $w={38}><svg width="16" height="9" viewBox="0 0 16 9" fill="none" stroke="#1b1b1b" strokeWidth="1.800"><path d="M1.500 8L8 1.500 14.500 8" /></svg></TrayCell>
          <TrayCell $w={44}>
            <svg width="20" height="15" viewBox="0 0 20 15" fill="none" stroke="#1b1b1b" strokeWidth="1.300"><rect x=".7" y=".7" width="18.600" height="13.400" rx="2" /><path d="M3.500 4.300h13M4.500 7.300h11" strokeDasharray="1.500 1.800" /><path d="M5 10.800h10" /></svg>
          </TrayCell>
          <Stack $w={28} $align="center"><Label>ENG</Label><Label>IN</Label></Stack>
          <TrayCell $w={23} />
          <TrayCell $w={30}>
            <svg width="20" height="15" viewBox="0 0 20 15" fill="none" stroke="#1b1b1b" strokeWidth="1.400"><path d="M.8 5.500C6-.2 14-.2 19.200 5.500M3.800 8.300c3.600-3.700 8.800-3.700 12.400 0M6.600 11c2-2 4.800-2 6.800 0" /><circle cx="10" cy="13" r="1.700" fill="#1b1b1b" stroke="none" /></svg>
          </TrayCell>
          <TrayCell $w={30}>
            <svg width="20" height="16" viewBox="0 0 20 16" fill="none" stroke="#1b1b1b" strokeWidth="1.300"><path d="M1 5.500h2.800L8 1.500v13L3.800 10.500H1zM10.500 5.500c1.300 1.500 1.300 3.500 0 5M13 3.300c2.600 2.800 2.600 6.600 0 9.400" /><path d="M15.700 1.200c4 4 4 9.600 0 13.600" stroke="#9d9d9d" /></svg>
          </TrayCell>
          <TrayCell $w={37}>
            <svg width="20" height="13" viewBox="0 0 20 13"><rect x=".8" y=".8" width="16" height="11.400" rx="2.500" fill="none" stroke="#1b1b1b" strokeWidth="1.500" /><rect x="3" y="3" width="8.500" height="7" rx="1" fill="#1b1b1b" /><path d="M17.500 4.500c3 0 3 4 0 4z" fill="#1b1b1b" /></svg>
          </TrayCell>
          <Stack $w={73} $align="flex-end"><Label $track={-0.2}>4:00 PM</Label><Label $track={-0.1}>3/29/2024</Label></Stack>
          <TrayCell $w={11} />
          <TrayCell $w={39}>
            <svg width="17" height="20" viewBox="0 0 17 20" fill="#0a4494"><path d="M8.500.5a6.500 6.500 0 0 0-6.500 6.500v5L.3 15.500V16.500h16.400V15.500L15 12V7A6.500 6.500 0 0 0 8.500.5zM5.500 17.500h6a3 2.300 0 0 1-6 0z" /></svg>
          </TrayCell>
          <Copilot />
        </Tray>
      </Taskbar>
    </Screen>
  );
}
